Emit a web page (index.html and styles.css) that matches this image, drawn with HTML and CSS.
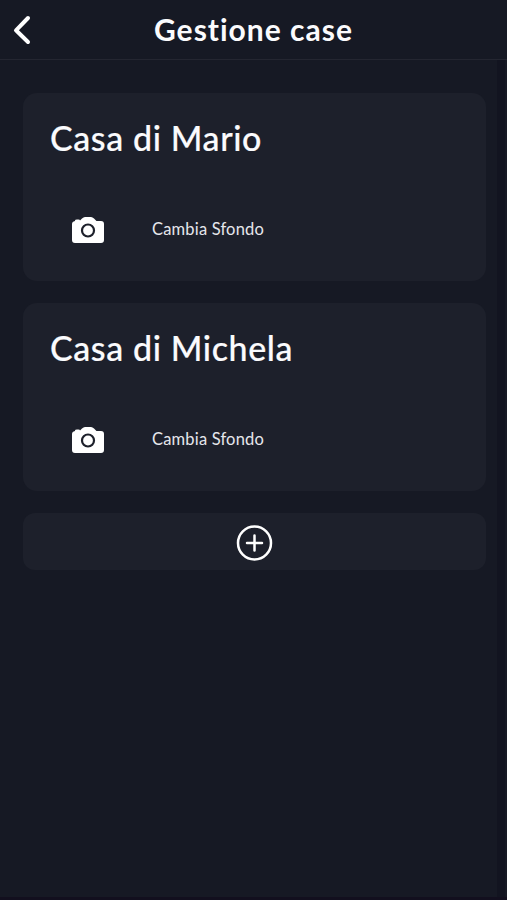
FILE: index.html
```html
<!DOCTYPE html>
<html lang="it">
<head>
<meta charset="utf-8">
<title>Gestione case</title>
<link rel="stylesheet" href="styles.css">
</head>
<body>
<div class="screen">
  <header class="topbar">
    <svg class="back" viewBox="0 0 20 32"><path d="M16 4 4 16.300 16 28"/></svg>
    <h1>Gestione case</h1>
  </header>
  <main class="content">
    <section class="card">
      <h2>Casa di Mario</h2>
      <div class="action">
        <svg class="camera" viewBox="0 0 34 28"><path class="body" d="M4 5V4.500Q4 3.500 6 3.500H7.500Q9 3.500 9 4.500L11 2.500Q12.500 1 14 1H20Q21.500 1 23 2.500L25.500 5H30Q33 5 33 8V24Q33 27 30 27H4Q1 27 1 24V8Q1 5.500 4 5Z"/><circle cx="17" cy="14.500" r="6"/></svg>
        <span>Cambia Sfondo</span>
      </div>
    </section>
    <section class="card">
      <h2>Casa di Michela</h2>
      <div class="action">
        <svg class="camera" viewBox="0 0 34 28"><path class="body" d="M4 5V4.500Q4 3.500 6 3.500H7.500Q9 3.500 9 4.500L11 2.500Q12.500 1 14 1H20Q21.500 1 23 2.500L25.500 5H30Q33 5 33 8V24Q33 27 30 27H4Q1 27 1 24V8Q1 5.500 4 5Z"/><circle cx="17" cy="14.500" r="6"/></svg>
        <span>Cambia Sfondo</span>
      </div>
    </section>
    <section class="add">
      <svg viewBox="0 0 38 38"><circle cx="18.500" cy="19" r="16.500"/><path d="M18.500 11.500V26.500M11 19H26"/></svg>
    </section>
  </main>
</div>
</body>
</html>
```
FILE: styles.css
```css
* { box-sizing: border-box; }
body { margin: 0; background: #161924; color: #fbfbfd; font-family: Lato, "Open Sans", sans-serif; }
.screen { height: 900px; display: flex; flex-direction: column; border-bottom: 3px solid #120f1e; }
.topbar { height: 60px; flex: none; display: grid; grid-template-columns: 46px 1fr 46px; align-items: center; border-bottom: 1px solid #242631; }
.back { width: 20px; height: 32px; margin-left: 12px; fill: none; stroke: #fff; stroke-width: 4; stroke-linecap: round; stroke-linejoin: round; }
h1 { margin: 0 0 2px; font-size: 30px; line-height: 36px; font-weight: 700; text-align: center; white-space: nowrap; letter-spacing: 1px; }
.content { flex: 1; padding: 33px 11px 0 23px; margin-right: 2px; display: flex; flex-direction: column; gap: 22px; border-right: 8px solid #121420; }
.card { height: 188px; flex: none; padding: 24px 27px; border-radius: 14px; background: #1d202b; }
h2 { margin: 0; font-size: 34px; line-height: 42px; font-weight: 500; white-space: nowrap; letter-spacing: .6px; -webkit-text-stroke: .2px #fbfbfd; }
.action { display: flex; align-items: center; height: 36px; margin-top: 53px; padding-left: 21px; }
.camera { width: 34px; height: 28px; margin-right: 47px; }
.camera .body { fill: #fff; }
.camera circle { fill: none; stroke: #1d202b; stroke-width: 2.2; }
.action span { font-size: 16.5px; line-height: 20px; margin-top: -2px; color: #e6e7ec; letter-spacing: .18px; }
.add { height: 57px; flex: none; display: flex; align-items: center; justify-content: center; border-radius: 12px; background: #1d202b; }
.add svg { width: 38px; height: 38px; margin-top: 3px; fill: none; stroke: #fff; stroke-width: 2.5; stroke-linecap: round; }
```
